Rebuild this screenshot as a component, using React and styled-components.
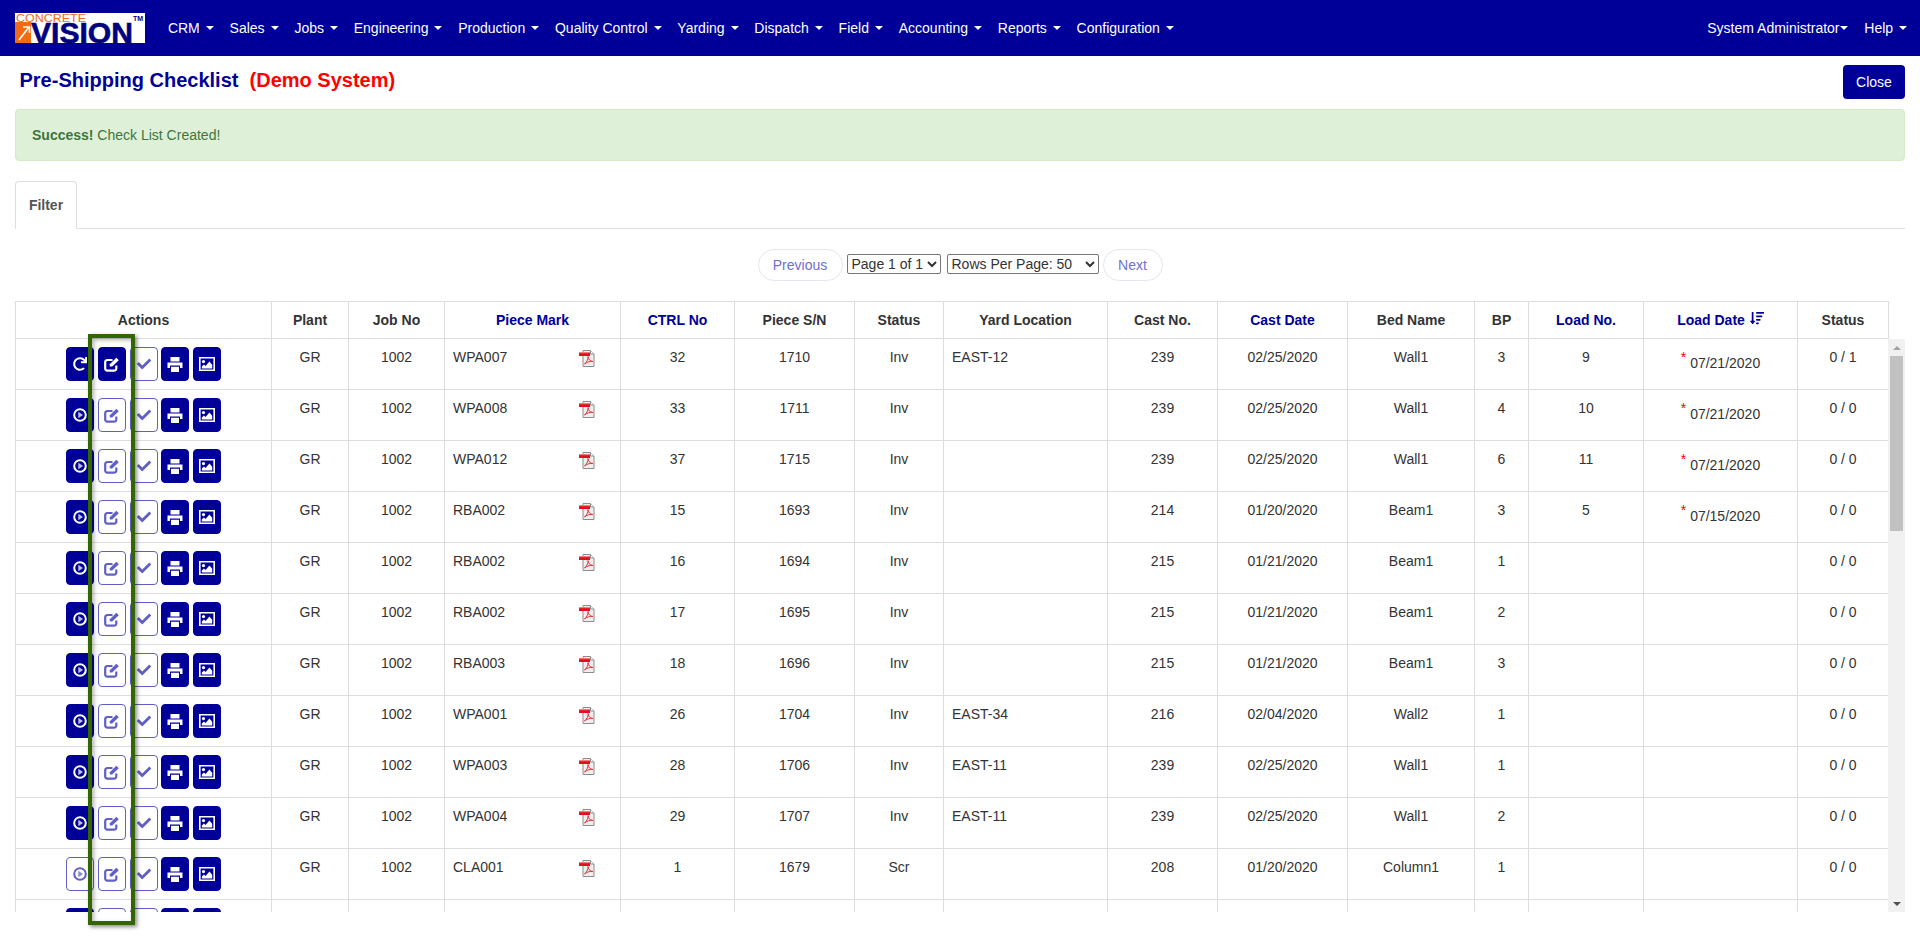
import React from 'react';
import styled, { createGlobalStyle } from 'styled-components';
import { FaRedo, FaCheck, FaSortAmountDown } from 'react-icons/fa';

const NAVY = '#000099';
const SOFT = '#5f5fc4';

const GlobalStyle = createGlobalStyle`
  html, body {
    margin: 0;
    padding: 0;
    background: #fff;
    font-family: "Liberation Sans", Arial, sans-serif;
    font-size: 14px;
    line-height: 20px;
    color: #333;
  }
  * { box-sizing: border-box; }
`;

const Page = styled.div`
  position: relative;
  height: 937px;
  overflow: hidden;
`;

const NavBar = styled.nav`
  height: 56px;
  background: ${NAVY};
  display: flex;
  align-items: center;
  padding: 0 5px 0 15px;
`;

const NavList = styled.div`
  display: flex;
  align-items: center;
  margin-left: ${props => props.$right ? 'auto' : '15px'};
`;

const NavItem = styled.a`
  color: #fff;
  padding: 0 7.9px;
  margin-right: ${props => props.$gap || 0}px;
  display: flex;
  align-items: center;
  white-space: pre;
`;

const Caret = styled.span`
  width: 0;
  height: 0;
  margin-left: ${props => props.$tight ? '0' : '6px'};
  border-top: 4px solid #fff;
  border-left: 4px solid transparent;
  border-right: 4px solid transparent;
`;

const Content = styled.main`
  padding: 0 15px;
`;

const TitleRow = styled.div`
  height: 53px;
  display: flex;
  align-items: flex-start;
  justify-content: space-between;
  padding-left: 4.5px;
`;

const Title = styled.h1`
  margin: 13px 0 0;
  font-size: 20px;
  line-height: 22px;
  font-weight: bold;
  color: ${NAVY};
  white-space: pre;
`;

const Demo = styled.span`
  color: #f00;
`;

const CloseButton = styled.button`
  margin-top: 9px;
  width: 62px;
  height: 34px;
  background: ${NAVY};
  color: #fff;
  border: 0;
  border-radius: 4px;
  font: inherit;
`;

const Alert = styled.div`
  height: 52px;
  padding: 15px 16px;
  background: #dff0d8;
  border: 1px solid #d6e9c6;
  border-radius: 4px;
  color: #3c763d;
`;

const Tabs = styled.div`
  margin-top: 20px;
  height: 48px;
  border-bottom: 1px solid #ddd;
  display: flex;
`;

const Tab = styled.div`
  width: 62px;
  height: 48px;
  padding-top: 13px;
  text-align: center;
  font-weight: bold;
  color: #555;
  background: #fff;
  border: 1px solid #ddd;
  border-bottom-color: #fff;
  border-radius: 4px 4px 0 0;
`;

const Pager = styled.div`
  height: 72px;
  display: flex;
  align-items: flex-start;
  justify-content: center;
  gap: 4px;
  padding-top: 20px;
`;

const PillButton = styled.button`
  width: ${props => props.$w}px;
  height: 32px;
  background: #fff;
  border: 1px solid #e6e6ee;
  border-radius: 16px;
  color: #6f6fcf;
  font: inherit;
`;

const PageSelect = styled.select`
  width: ${props => props.$w}px;
  height: 20px;
  margin-top: 5px;
  margin-left: ${props => props.$offset || 0}px;
  padding: 0;
  font: inherit;
  line-height: 18px;
  color: #333;
  background: #fff;
  border: 1px solid #767676;
  border-radius: 2px;
`;

const Grid = styled.table`
  width: 1873px;
  table-layout: fixed;
  border-collapse: collapse;
`;

const HeadCell = styled.th`
  height: 37px;
  padding: 0 4px;
  border: 1px solid #ddd;
  font-weight: bold;
  text-align: center;
  color: ${props => props.$link ? NAVY : '#333'};
  white-space: nowrap;
`;

const SortIcon = styled(FaSortAmountDown)`
  margin-left: 5px;
  font-size: 14px;
  vertical-align: 0;
`;

const BodyWrap = styled.div`
  display: flex;
  height: 573px;
`;

const BodyClip = styled.div`
  width: 1873px;
  overflow: hidden;
`;

const Cell = styled.td`
  padding: 8px;
  border: 1px solid #ddd;
  border-top: 0;
  vertical-align: top;
  text-align: ${props => props.$left ? 'left' : 'center'};
`;

const Actions = styled.div`
  display: flex;
  justify-content: center;
  gap: 3.75px;
`;

const ActionButton = styled.button`
  width: 28px;
  height: 34px;
  padding: 0;
  display: flex;
  align-items: center;
  justify-content: center;
  font-size: 14px;
  border-radius: 4px;
  border: 1px solid ${props => props.$solid ? NAVY : SOFT};
  background: ${props => props.$solid ? NAVY : '#fff'};
  color: ${props => props.$solid ? '#fff' : SOFT};
`;

const MarkRow = styled.div`
  display: flex;
  align-items: flex-start;
  justify-content: space-between;
  padding-right: 17px;
`;

const PdfIcon = styled.svg`
  width: 16px;
  height: 17px;
  margin-top: 3px;
  flex: none;
`;

const LateMark = styled.span`
  color: #f00;
  vertical-align: 6px;
`;

const ScrollBar = styled.div`
  width: 17px;
  background: #f1f1f1;
  display: flex;
  flex-direction: column;
  align-items: center;
`;

const ScrollArrow = styled.div`
  height: 17px;
  display: flex;
  align-items: center;
  justify-content: center;
  flex: none;
  &::after {
    content: '';
    border-left: 4px solid transparent;
    border-right: 4px solid transparent;
    border-${props => props.$up ? 'bottom' : 'top'}: 4px solid ${props => props.$up ? '#a3a3a3' : '#505050'};
  }
`;

const ScrollThumb = styled.div`
  width: 13px;
  height: 175px;
  background: #c1c1c1;
`;

const ScrollSpacer = styled.div`
  flex: 1;
`;

// green annotation frame drawn on top of the edit column
const Highlight = styled.div`
  position: absolute;
  left: 88px;
  top: 334px;
  width: 47px;
  height: 591px;
  border: 4px solid #336600;
  box-shadow: 2px 2px 4px rgba(0, 0, 0, 0.45), inset 2px 2px 4px rgba(0, 0, 0, 0.3);
  pointer-events: none;
`;

const leftMenu = ['CRM', 'Sales', 'Jobs', 'Engineering', 'Production', 'Quality Control', 'Yarding', 'Dispatch', 'Field', 'Accounting', 'Reports', 'Configuration'];

const columns = [
  { label: 'Actions', width: 256 },
  { label: 'Plant', width: 77 },
  { label: 'Job No', width: 96 },
  { label: 'Piece Mark', width: 176, link: true },
  { label: 'CTRL No', width: 114, link: true },
  { label: 'Piece S/N', width: 120 },
  { label: 'Status', width: 89 },
  { label: 'Yard Location', width: 164 },
  { label: 'Cast No.', width: 110 },
  { label: 'Cast Date', width: 130, link: true },
  { label: 'Bed Name', width: 127 },
  { label: 'BP', width: 54 },
  { label: 'Load No.', width: 115, link: true },
  { label: 'Load Date', width: 154, link: true, sorted: true },
  { label: 'Status', width: 91 },
];

const rows = [
  { mark: 'WPA007', ctrl: 32, sn: 1710, st: 'Inv', yard: 'EAST-12', cast: 239, date: '02/25/2020', bed: 'Wall1', bp: 3, load: 9, loadDate: '07/21/2020', count: '0 / 1', started: true, editing: true },
  { mark: 'WPA008', ctrl: 33, sn: 1711, st: 'Inv', yard: '', cast: 239, date: '02/25/2020', bed: 'Wall1', bp: 4, load: 10, loadDate: '07/21/2020', count: '0 / 0' },
  { mark: 'WPA012', ctrl: 37, sn: 1715, st: 'Inv', yard: '', cast: 239, date: '02/25/2020', bed: 'Wall1', bp: 6, load: 11, loadDate: '07/21/2020', count: '0 / 0' },
  { mark: 'RBA002', ctrl: 15, sn: 1693, st: 'Inv', yard: '', cast: 214, date: '01/20/2020', bed: 'Beam1', bp: 3, load: 5, loadDate: '07/15/2020', count: '0 / 0' },
  { mark: 'RBA002', ctrl: 16, sn: 1694, st: 'Inv', yard: '', cast: 215, date: '01/21/2020', bed: 'Beam1', bp: 1, count: '0 / 0' },
  { mark: 'RBA002', ctrl: 17, sn: 1695, st: 'Inv', yard: '', cast: 215, date: '01/21/2020', bed: 'Beam1', bp: 2, count: '0 / 0' },
  { mark: 'RBA003', ctrl: 18, sn: 1696, st: 'Inv', yard: '', cast: 215, date: '01/21/2020', bed: 'Beam1', bp: 3, count: '0 / 0' },
  { mark: 'WPA001', ctrl: 26, sn: 1704, st: 'Inv', yard: 'EAST-34', cast: 216, date: '02/04/2020', bed: 'Wall2', bp: 1, count: '0 / 0' },
  { mark: 'WPA003', ctrl: 28, sn: 1706, st: 'Inv', yard: 'EAST-11', cast: 239, date: '02/25/2020', bed: 'Wall1', bp: 1, count: '0 / 0' },
  { mark: 'WPA004', ctrl: 29, sn: 1707, st: 'Inv', yard: 'EAST-11', cast: 239, date: '02/25/2020', bed: 'Wall1', bp: 2, count: '0 / 0' },
  { mark: 'CLA001', ctrl: 1, sn: 1679, st: 'Scr', yard: '', cast: 208, date: '01/20/2020', bed: 'Column1', bp: 1, count: '0 / 0', idle: true },
  { mark: '', ctrl: '', sn: '', st: '', yard: '', cast: '', date: '', bed: '', bp: '', count: '' },
];

const ColGroup = () => (
  <colgroup>
    {columns.map((col, i) => <col key={i} width={col.width} />)}
  </colgroup>
);

const Logo = () => (
  <svg width="130" height="30" viewBox="0 0 130 30" overflow="visible">
    <rect width="130" height="30" fill="#fff" />
    <rect x="0" y="9" width="16" height="21" fill="#f26a13" />
    <path d="M4 27 L14 14 M8 14 H14.5 V20" stroke="#fff" strokeWidth="1.6" fill="none" />
    <text x="1" y="9" fontFamily="Liberation Sans" fontSize="11" fill="#f26a13" textLength="70" lengthAdjust="spacingAndGlyphs">CONCRETE</text>
    <text x="16" y="29.6" fontFamily="Liberation Sans" fontWeight="bold" fontSize="29" fill="#000080" stroke="#000080" strokeWidth="0.6" textLength="102" lengthAdjust="spacingAndGlyphs">VISION</text>
    <text x="118" y="8" fontFamily="Liberation Sans" fontWeight="bold" fontSize="7" fill="#000080">TM</text>
  </svg>
);

const Pdf = () => (
  <PdfIcon viewBox="0 0 16 17">
    <path d="M4 .5H11.5L15 4V16.5H4Z" fill="#eee" stroke="#8c8c8c" />
    <path d="M11.5 .5V4H15" fill="#fff" stroke="#8c8c8c" />
    <rect x="0" y="2" width="11" height="4" fill="#e0101c" />
    <rect x="0" y="2" width="11" height="1.2" fill="#ff7a7a" />
    <path d="M5.5 14C8 12 9.5 8.5 9 6.5 9 9 11 11.5 14 11.5 11 11 8 12 5.5 14Z" fill="none" stroke="#e8313a" strokeWidth="1" />
  </PdfIcon>
);

const PlayIcon = () => (
  <svg width="14" height="14" viewBox="0 0 14 14">
    <circle cx="7" cy="7" r="5.8" fill="none" stroke="currentColor" strokeWidth="2" />
    <path d="M5.3 3.8 10 7 5.3 10.2Z" fill="currentColor" opacity="0.75" />
  </svg>
);

const EditIcon = () => (
  <svg width="16" height="15" viewBox="0 0 16 15">
    <path d="M8.5 3H3.5A2.2 2.2 0 0 0 1.2 5.2V11.3A2.2 2.2 0 0 0 3.5 13.7H10A2.2 2.2 0 0 0 12.3 11.3V8.5" fill="none" stroke="currentColor" strokeWidth="2.2" />
    <path d="M5.8 9.6V7.2L12.3 .8 14.8 3.2 8.2 9.6Z" fill="currentColor" />
  </svg>
);

const PrintIcon = () => (
  <svg width="16" height="15" viewBox="0 0 16 15">
    <path fill="currentColor" d="M3.5 0H12.5V4.5H3.5ZM0.5 5.5H15.5V11H13V8.5H3V11H.5ZM4 9.8H12V15H4Z" />
  </svg>
);

const PictureIcon = () => (
  <svg width="16" height="14" viewBox="0 0 16 14">
    <path fill="currentColor" fillRule="evenodd" d="M0 0H16V14H0ZM1.6 1.6V12.4H14.4V1.6Z" />
    <circle cx="4.5" cy="4.6" r="1.6" fill="currentColor" />
    <path fill="currentColor" d="M2.8 11.5V9.5L5 7.5 6.6 9 10.4 4.6 13.2 7.8V11.5Z" />
  </svg>
);

const RowActions = ({ row }) => (
  <Actions>
    <ActionButton $solid={!row.idle}>
      {row.started ? <FaRedo /> : <PlayIcon />}
    </ActionButton>
    <ActionButton $solid={row.editing}><EditIcon /></ActionButton>
    <ActionButton><FaCheck /></ActionButton>
    <ActionButton $solid><PrintIcon /></ActionButton>
    <ActionButton $solid><PictureIcon /></ActionButton>
  </Actions>
);

const App = () => (
  <Page>
    <GlobalStyle />
    <NavBar>
      <Logo />
      <NavList>
        {leftMenu.map(item => (
          <NavItem key={item}>{item}<Caret /></NavItem>
        ))}
      </NavList>
      <NavList $right>
        <NavItem $gap={1}>System Administrator<Caret $tight /></NavItem>
        <NavItem>Help<Caret /></NavItem>
      </NavList>
    </NavBar>
    <Content>
      <TitleRow>
        <Title>Pre-Shipping Checklist{'  '}<Demo>(Demo System)</Demo></Title>
        <CloseButton>Close</CloseButton>
      </TitleRow>
      <Alert><strong>Success!</strong> Check List Created!</Alert>
      <Tabs><Tab>Filter</Tab></Tabs>
      <Pager>
        <PillButton $w={85}>Previous</PillButton>
        <PageSelect $w={94}><option>Page 1 of 1</option></PageSelect>
        <PageSelect $w={152} $offset={2}><option>Rows Per Page: 50</option></PageSelect>
        <PillButton $w={60}>Next</PillButton>
      </Pager>
      <Grid>
        <ColGroup />
        <thead>
          <tr>
            {columns.map((col, i) => (
              <HeadCell key={i} $link={col.link}>
                {col.label}{col.sorted && <SortIcon />}
              </HeadCell>
            ))}
          </tr>
        </thead>
      </Grid>
      <BodyWrap>
        <BodyClip>
          <Grid>
            <ColGroup />
            <tbody>
              {rows.map((row, i) => (
                <tr key={i}>
                  <Cell><RowActions row={row} /></Cell>
                  <Cell>{row.mark && 'GR'}</Cell>
                  <Cell>{row.mark && '1002'}</Cell>
                  <Cell $left>
                    {row.mark && <MarkRow>{row.mark}<Pdf /></MarkRow>}
                  </Cell>
                  <Cell>{row.ctrl}</Cell>
                  <Cell>{row.sn}</Cell>
                  <Cell>{row.st}</Cell>
                  <Cell $left>{row.yard}</Cell>
                  <Cell>{row.cast}</Cell>
                  <Cell>{row.date}</Cell>
                  <Cell>{row.bed}</Cell>
                  <Cell>{row.bp}</Cell>
                  <Cell>{row.load}</Cell>
                  <Cell>
                    {row.loadDate && <><LateMark>*</LateMark> {row.loadDate}</>}
                  </Cell>
                  <Cell>{row.count}</Cell>
                </tr>
              ))}
            </tbody>
          </Grid>
        </BodyClip>
        <ScrollBar>
          <ScrollArrow $up />
          <ScrollThumb />
          <ScrollSpacer />
          <ScrollArrow />
        </ScrollBar>
      </BodyWrap>
    </Content>
    <Highlight />
  </Page>
);

export default App;
